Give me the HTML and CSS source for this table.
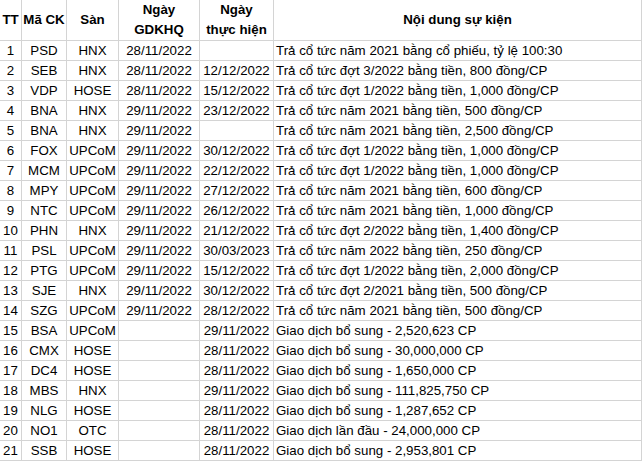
FILE: index.html
```html
<!DOCTYPE html>
<html lang="vi">
<head>
<meta charset="utf-8">
<title>Lịch sự kiện</title>
<link rel="stylesheet" href="styles.css">
</head>
<body>
<table class="sheet">
  <colgroup>
    <col class="c-tt"><col class="c-ma"><col class="c-san"><col class="c-gd"><col class="c-th"><col class="c-nd">
  </colgroup>
  <thead>
    <tr>
      <th>TT</th><th>Mã CK</th><th>Sàn</th><th>Ngày<br>GDKHQ</th><th>Ngày<br>thực hiện</th><th>Nội dung sự kiện</th>
    </tr>
  </thead>
  <tbody>
    <tr><td>1</td><td>PSD</td><td>HNX</td><td>28/11/2022</td><td></td><td class="nd">Trả cổ tức năm 2021 bằng cổ phiếu, tỷ lệ 100:30</td></tr>
    <tr><td>2</td><td>SEB</td><td>HNX</td><td>28/11/2022</td><td>12/12/2022</td><td class="nd">Trả cổ tức đợt 3/2022 bằng tiền, 800 đồng/CP</td></tr>
    <tr><td>3</td><td>VDP</td><td>HOSE</td><td>28/11/2022</td><td>15/12/2022</td><td class="nd">Trả cổ tức đợt 1/2022 bằng tiền, 1,000 đồng/CP</td></tr>
    <tr><td>4</td><td>BNA</td><td>HNX</td><td>29/11/2022</td><td>23/12/2022</td><td class="nd">Trả cổ tức năm 2021 bằng tiền, 500 đồng/CP</td></tr>
    <tr><td>5</td><td>BNA</td><td>HNX</td><td>29/11/2022</td><td></td><td class="nd">Trả cổ tức năm 2021 bằng tiền, 2,500 đồng/CP</td></tr>
    <tr><td>6</td><td>FOX</td><td>UPCoM</td><td>29/11/2022</td><td>30/12/2022</td><td class="nd">Trả cổ tức đợt 1/2022 bằng tiền, 1,000 đồng/CP</td></tr>
    <tr><td>7</td><td>MCM</td><td>UPCoM</td><td>29/11/2022</td><td>22/12/2022</td><td class="nd">Trả cổ tức đợt 1/2022 bằng tiền, 1,000 đồng/CP</td></tr>
    <tr><td>8</td><td>MPY</td><td>UPCoM</td><td>29/11/2022</td><td>27/12/2022</td><td class="nd">Trả cổ tức năm 2021 bằng tiền, 600 đồng/CP</td></tr>
    <tr><td>9</td><td>NTC</td><td>UPCoM</td><td>29/11/2022</td><td>26/12/2022</td><td class="nd">Trả cổ tức năm 2021 bằng tiền, 1,000 đồng/CP</td></tr>
    <tr><td>10</td><td>PHN</td><td>HNX</td><td>29/11/2022</td><td>21/12/2022</td><td class="nd">Trả cổ tức đợt 2/2022 bằng tiền, 1,400 đồng/CP</td></tr>
    <tr><td>11</td><td>PSL</td><td>UPCoM</td><td>29/11/2022</td><td>30/03/2023</td><td class="nd">Trả cổ tức năm 2022 bằng tiền, 250 đồng/CP</td></tr>
    <tr><td>12</td><td>PTG</td><td>UPCoM</td><td>29/11/2022</td><td>15/12/2022</td><td class="nd">Trả cổ tức đợt 1/2022 bằng tiền, 2,000 đồng/CP</td></tr>
    <tr><td>13</td><td>SJE</td><td>HNX</td><td>29/11/2022</td><td>30/12/2022</td><td class="nd">Trả cổ tức đợt 2/2021 bằng tiền, 500 đồng/CP</td></tr>
    <tr><td>14</td><td>SZG</td><td>UPCoM</td><td>29/11/2022</td><td>28/12/2022</td><td class="nd">Trả cổ tức năm 2021 bằng tiền, 500 đồng/CP</td></tr>
    <tr><td>15</td><td>BSA</td><td>UPCoM</td><td></td><td>29/11/2022</td><td class="nd">Giao dịch bổ sung - 2,520,623 CP</td></tr>
    <tr><td>16</td><td>CMX</td><td>HOSE</td><td></td><td>28/11/2022</td><td class="nd">Giao dịch bổ sung - 30,000,000 CP</td></tr>
    <tr><td>17</td><td>DC4</td><td>HOSE</td><td></td><td>28/11/2022</td><td class="nd">Giao dịch bổ sung - 1,650,000 CP</td></tr>
    <tr><td>18</td><td>MBS</td><td>HNX</td><td></td><td>29/11/2022</td><td class="nd">Giao dịch bổ sung - 111,825,750 CP</td></tr>
    <tr><td>19</td><td>NLG</td><td>HOSE</td><td></td><td>28/11/2022</td><td class="nd">Giao dịch bổ sung - 1,287,652 CP</td></tr>
    <tr><td>20</td><td>NO1</td><td>OTC</td><td></td><td>28/11/2022</td><td class="nd">Giao dịch lần đầu - 24,000,000 CP</td></tr>
    <tr><td>21</td><td>SSB</td><td>HOSE</td><td></td><td>28/11/2022</td><td class="nd">Giao dịch bổ sung - 2,953,801 CP</td></tr>
  </tbody>
</table>
</body>
</html>
```

FILE: styles.css
```css
html, body {
  margin: 0;
  padding: 0;
  background: #ffffff;
}

.sheet {
  border-collapse: separate;
  border-spacing: 0;
  table-layout: fixed;
  width: 642px;
  font-family: "Liberation Sans", Arial, sans-serif;
  font-size: 13.3px;
  color: #000000;
}

.c-tt { width: 22px; }
.c-ma { width: 45px; }
.c-san { width: 52px; }
.c-gd { width: 81px; }
.c-th { width: 74px; }
.c-nd { width: 368px; }

.sheet th,
.sheet td {
  border-right: 1px solid #d4d4d4;
  border-bottom: 1px solid #d4d4d4;
  padding: 0;
  text-align: center;
  white-space: nowrap;
  overflow: hidden;
}

.sheet th {
  height: 40px;
  line-height: 20px;
  font-weight: bold;
  vertical-align: middle;
}

.sheet td {
  height: 19px;
  line-height: 19px;
  vertical-align: bottom;
}

.sheet td.nd {
  text-align: left;
  padding-left: 2px;
}
```
